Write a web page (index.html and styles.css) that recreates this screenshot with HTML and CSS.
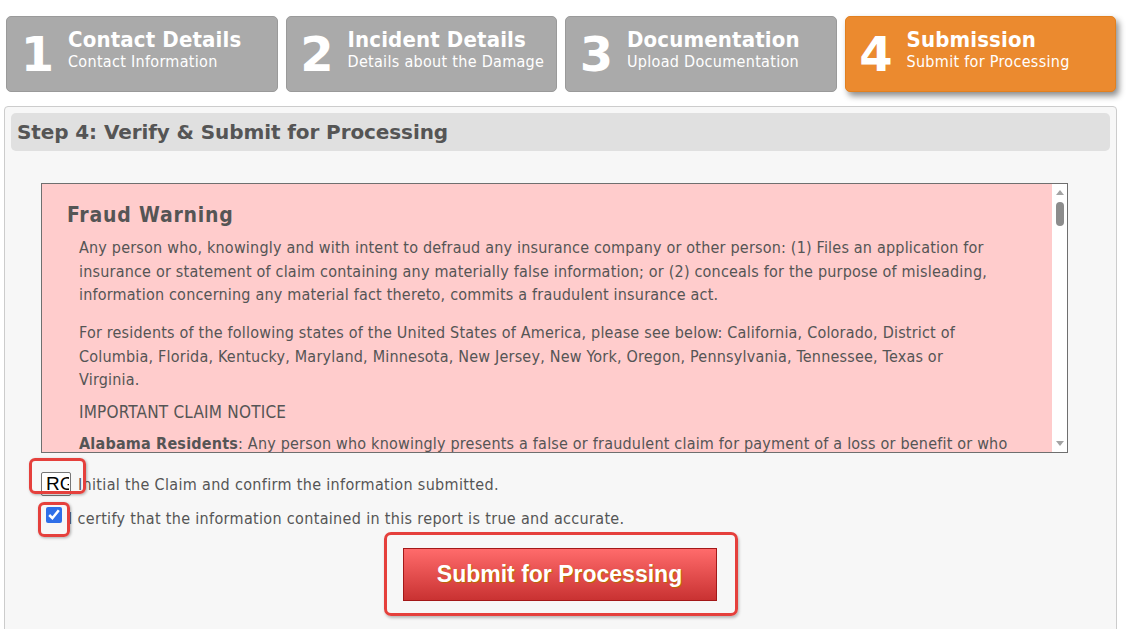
FILE: index.html
```html
<!DOCTYPE html>
<html lang="en">
<head>
<meta charset="utf-8">
<title>Claim Submission</title>
<link rel="stylesheet" href="styles.css">
</head>
<body>
<div class="steps">
  <div class="step">
    <div class="step-num">1</div>
    <div class="step-text"><div class="step-title">Contact Details</div><div class="step-sub">Contact Information</div></div>
  </div>
  <div class="step">
    <div class="step-num">2</div>
    <div class="step-text"><div class="step-title">Incident Details</div><div class="step-sub">Details about the Damage</div></div>
  </div>
  <div class="step">
    <div class="step-num">3</div>
    <div class="step-text"><div class="step-title">Documentation</div><div class="step-sub">Upload Documentation</div></div>
  </div>
  <div class="step step-active">
    <div class="step-num">4</div>
    <div class="step-text"><div class="step-title">Submission</div><div class="step-sub">Submit for Processing</div></div>
  </div>
</div>

<div class="panel">
  <div class="panel-head">Step 4: Verify &amp; Submit for Processing</div>
  <div class="panel-body">
    <div class="warning">
      <div class="warning-scroll">
        <h3 class="warning-title">Fraud Warning</h3>
        <p class="warn-p">Any person who, knowingly and with intent to defraud any insurance company or other person: (1) Files an application for insurance or statement of claim containing any materially false information; or (2) conceals for the purpose of misleading, information concerning any material fact thereto, commits a fraudulent insurance act.</p>
        <p class="warn-p">For residents of the following states of the United States of America, please see below: California, Colorado, District of Columbia, Florida, Kentucky, Maryland, Minnesota, New Jersey, New York, Oregon, Pennsylvania, Tennessee, Texas or Virginia.</p>
        <p class="claim-notice">IMPORTANT CLAIM NOTICE</p>
        <p class="warn-p state-p"><b>Alabama Residents</b>: Any person who knowingly presents a false or fraudulent claim for payment of a loss or benefit or who knowingly presents false information in an application for insurance is guilty of a crime and may be subject to restitution fines or confinement in prison, or any combination thereof.</p>
        <p class="warn-p state-p"><b>California Residents</b>: For your protection California law requires the following to appear on this form. Any person who knowingly presents false or fraudulent claim for the payment of a loss is guilty of a crime and may be subject to fines and confinement in state prison.</p>
        <p class="warn-p state-p"><b>Colorado Residents</b>: It is unlawful to knowingly provide false, incomplete, or misleading facts or information to an insurance company for the purpose of defrauding or attempting to defraud the company. Penalties may include imprisonment, fines, denial of insurance and civil damages.</p>
        <p class="warn-p state-p"><b>District of Columbia Residents</b>: WARNING: It is a crime to provide false or misleading information to an insurer for the purpose of defrauding the insurer or any other person. Penalties include imprisonment and/or fines.</p>
        <p class="warn-p state-p"><b>Florida Residents</b>: Any person who knowingly and with intent to injure, defraud, or deceive any insurer files a statement of claim or an application containing any false, incomplete, or misleading information is guilty of a felony of the third degree.</p>
        <p class="warn-p state-p"><b>Kentucky Residents</b>: Any person who knowingly and with intent to defraud any insurance company or other person files a statement of claim containing any materially false information or conceals, for the purpose of misleading, information concerning any fact material thereto commits a fraudulent insurance act, which is a crime.</p>
        <p class="warn-p state-p"><b>Maryland Residents</b>: Any person who knowingly or willfully presents a false or fraudulent claim for payment of a loss or benefit or who knowingly or willfully presents false information in an application for insurance is guilty of a crime and may be subject to fines and confinement in prison.</p>
        <p class="warn-p state-p"><b>Minnesota Residents</b>: A person who files a claim with intent to defraud or helps commit a fraud against an insurer is guilty of a crime.</p>
        <p class="warn-p state-p"><b>New Jersey Residents</b>: Any person who knowingly files a statement of claim containing any false or misleading information is subject to criminal and civil penalties.</p>
        <p class="warn-p state-p"><b>New York Residents</b>: Any person who knowingly and with intent to defraud any insurance company or other person files an application for insurance or statement of claim containing any materially false information, or conceals for the purpose of misleading, information concerning any fact material thereto, commits a fraudulent insurance act, which is a crime, and shall also be subject to a civil penalty not to exceed five thousand dollars and the stated value of the claim for each such violation.</p>
        <p class="warn-p state-p"><b>Oregon Residents</b>: Any person who knowingly and with intent to defraud or solicit another to defraud an insurer, by submitting an application or filing a claim containing a false statement as to any material fact, may be violating state law.</p>
        <p class="warn-p state-p"><b>Pennsylvania Residents</b>: Any person who knowingly and with intent to defraud any insurance company or other person files an application for insurance or statement of claim containing any materially false information or conceals for the purpose of misleading, information concerning any fact material thereto commits a fraudulent insurance act, which is a crime and subjects such person to criminal and civil penalties.</p>
        <p class="warn-p state-p"><b>Tennessee Residents</b>: It is a crime to knowingly provide false, incomplete or misleading information to an insurance company for the purpose of defrauding the company. Penalties include imprisonment, fines and denial of insurance benefits.</p>
        <p class="warn-p state-p"><b>Texas Residents</b>: Any person who knowingly presents a false or fraudulent claim for the payment of a loss is guilty of a crime and may be subject to fines and confinement in state prison.</p>
        <p class="warn-p state-p"><b>Virginia Residents</b>: It is a crime to knowingly provide false, incomplete or misleading information to an insurance company for the purpose of defrauding the company. Penalties include imprisonment, fines and denial of insurance benefits.</p>
      </div>
      <div class="scrollbar" aria-hidden="true">
        <span class="sb-up"></span>
        <span class="sb-thumb"></span>
        <span class="sb-down"></span>
      </div>
    </div>

    <div class="form-row initial-row">
      <input class="initial-input" type="text" value="RG" aria-label="Initials">
      <label class="row-label">Initial the Claim and confirm the information submitted.</label>
      <span class="mark mark-initial"></span>
    </div>
    <div class="form-row certify-row">
      <input class="certify-box" type="checkbox" checked aria-label="Certify">
      <label class="row-label">I certify that the information contained in this report is true and accurate.</label>
      <span class="mark mark-check"></span>
    </div>
    <div class="submit-row">
      <div class="submit-mark">
        <button class="submit-btn" type="button">Submit for Processing</button>
      </div>
    </div>
  </div>
</div>
</body>
</html>
```
FILE: styles.css
```css
* { box-sizing: border-box; }

body {
  margin: 0;
  background: #fff;
  color: #555;
  font-family: "DejaVu Sans Condensed", "DejaVu Sans", sans-serif;
}

/* step tabs */
.steps {
  display: grid;
  grid-template-columns: repeat(4, 1fr);
  gap: 8px;
  margin: 16px 10px 0 6px;
}

.step {
  display: flex;
  align-items: flex-start;
  height: 76px;
  padding: 11px 6px 0 6px;
  background: #aaa;
  border: 1px solid #9a9a9a;
  border-radius: 5px;
  color: #fff;
}

.step-active {
  background: #eb8a2f;
  border-color: #e2801f;
  box-shadow: 3px 4px 6px rgba(0, 0, 0, 0.45);
}

.step-num {
  width: 49px;
  flex: none;
  margin-top: 2px;
  font-family: "DejaVu Sans", sans-serif;
  font-size: 48px;
  font-weight: bold;
  line-height: 48px;
  text-align: center;
}

.step-text {
  margin-left: 6px;
  white-space: nowrap;
}

.step-title {
  font-size: 22px;
  font-weight: bold;
  line-height: 24px;
  letter-spacing: 0.15px;
}

.step-sub {
  font-size: 16px;
  line-height: 19px;
  letter-spacing: 0.3px;
}

/* main panel */
.panel {
  margin: 14px 9px 0 4px;
  padding: 6px 6px 40px 6px;
  background: #f7f7f7;
  border: 1px solid #ccc;
  border-radius: 4px 4px 0 0;
}

.panel-head {
  height: 38px;
  padding-left: 6px;
  background: #e0e0e0;
  border-radius: 5px;
  font-family: "DejaVu Sans", sans-serif;
  font-size: 20px;
  font-weight: bold;
  line-height: 38px;
  letter-spacing: -0.1px;
  color: #555;
}

.panel-body {
  padding: 32px 0 0 30px;
}

.warning {
  display: flex;
  width: 1027px;
  height: 270px;
  background: #fcc;
  border: 1px solid #6f6f6f;
}

.warning-scroll {
  flex: 1;
  min-width: 0;
  padding: 0 30px 0 25px;
  overflow-y: auto;
  scrollbar-width: none;
}

.scrollbar {
  display: flex;
  flex-direction: column;
  align-items: center;
  width: 15px;
  flex: none;
  padding: 6px 0 6px 1px;
  background: #fff;
}

.sb-up {
  width: 0;
  height: 0;
  border-left: 4px solid transparent;
  border-right: 4px solid transparent;
  border-bottom: 5px solid #a3a3a3;
}

.sb-thumb {
  width: 8px;
  height: 24px;
  margin-top: 7px;
  border-radius: 4px;
  background: #8c8c8c;
}

.sb-down {
  width: 0;
  height: 0;
  margin-top: auto;
  border-left: 4px solid transparent;
  border-right: 4px solid transparent;
  border-top: 5px solid #a3a3a3;
}

.warning-title {
  margin: 19px 0 8px;
  font-size: 21px;
  font-weight: bold;
  line-height: 25px;
  letter-spacing: 0.8px;
}

.warn-p {
  margin: 0 18px 14.5px 12px;
  font-size: 16px;
  line-height: 23.5px;
  letter-spacing: 0.2px;
}

.state-p {
  margin-right: 6px;
}

.claim-notice {
  margin: -6px 12px 7px;
  font-size: 17px;
  line-height: 25px;
  letter-spacing: 0.2px;
}

/* form rows */
.form-row {
  position: relative;
  display: flex;
  align-items: center;
  font-size: 16px;
}

.initial-row {
  height: 24px;
  margin-top: 19px;
  gap: 7px;
}

.initial-input {
  width: 30px;
  height: 24px;
  margin: 0;
  padding: 0 1px 0 4px;
  border: 1px solid #767676;
  border-radius: 2px;
  background: #fff;
  color: #000;
  font-family: "Liberation Sans", Arial, sans-serif;
  font-size: 19px;
}

.certify-row {
  height: 24px;
  margin-top: 9px;
}

.certify-box {
  width: 16px;
  height: 16px;
  margin: -4px 6px 0 5px;
  accent-color: #2f6fe8;
}

.row-label {
  color: #555;
  white-space: nowrap;
  letter-spacing: 0.33px;
}

.certify-row .row-label {
  margin-top: 2px;
}

.mark {
  position: absolute;
  border: 3px solid #e5403c;
  border-radius: 6px;
  box-shadow: 1px 1px 3px rgba(0, 0, 0, 0.3);
  pointer-events: none;
}

.mark-initial {
  left: -12px;
  top: -14px;
  width: 57px;
  height: 36px;
}

.mark-check {
  left: -3px;
  top: -3px;
  width: 32px;
  height: 35px;
}

.submit-row {
  margin-top: 3px;
  margin-left: -30px;
  text-align: center;
}

.submit-mark {
  display: inline-block;
  padding: 13px 18px 12px 16px;
  border: 3px solid #e5403c;
  border-radius: 7px;
  box-shadow: 1px 2px 3px rgba(0, 0, 0, 0.25);
}

.submit-btn {
  display: block;
  width: 314px;
  height: 53px;
  padding: 0;
  border: 1px solid #a31818;
  background: linear-gradient(#ff6b6b, #c93232);
  color: #fff;
  font-family: "Liberation Sans", Arial, sans-serif;
  font-size: 23px;
  font-weight: bold;
  text-shadow: 1px 1px 1px #b86a00;
  cursor: pointer;
}
```
